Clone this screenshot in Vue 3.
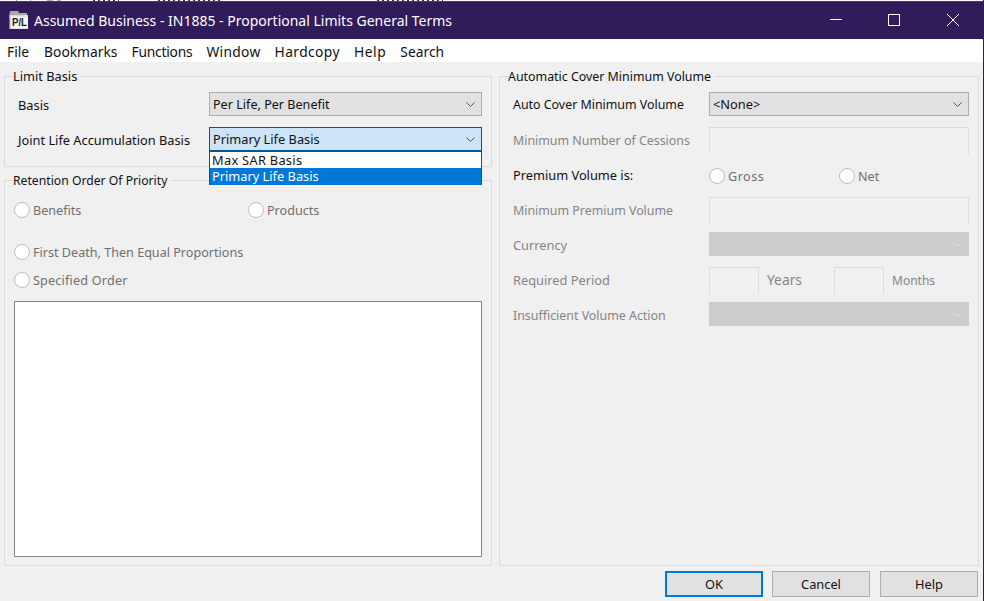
<script setup>
const leftRadios = [
  { label: 'First Death, Then Equal Proportions', cls: 'r-first' },
  { label: 'Specified Order', cls: 'r-spec' }
]
const menus = ['File', 'Bookmarks', 'Functions', 'Window', 'Hardcopy', 'Help', 'Search']
</script>

<template>
  <div class="win">
    <div class="strip"></div>
    <header class="title">
      <svg class="appicon" width="20" height="20" viewBox="0 0 20 20">
        <path d="M0.5 3 L1.5 1 L9 1 L10 3 L18 3 L18 8 L0.5 8 Z" fill="#a9a9a9" />
        <rect x="0.5" y="5" width="18.5" height="14" fill="#d8d8d8" />
        <rect x="2" y="6.5" width="17" height="12" fill="#f4f4f4" />
        <text x="3" y="16" font-size="11" font-weight="700" fill="#1c1c1c" font-family="Liberation Sans" textLength="15" lengthAdjust="spacingAndGlyphs">P/L</text>
      </svg>
      <span class="title-text">Assumed Business - IN1885 - Proportional Limits General Terms</span>
      <div class="caption">
        <svg width="14" height="14" viewBox="0 0 14 14" class="cap-min"><path d="M1 6.5H13" stroke="#fff" fill="none" /></svg>
        <svg width="14" height="14" viewBox="0 0 14 14" class="cap-max"><rect x="1.5" y="1.5" width="11" height="11" stroke="#fff" fill="none" /></svg>
        <svg width="14" height="14" viewBox="0 0 14 14" class="cap-close"><path d="M1 1L13 13M13 1L1 13" stroke="#fff" fill="none" /></svg>
      </div>
    </header>
    <nav class="menu">
      <span v-for="m in menus" :key="m">{{ m }}</span>
    </nav>
    <main class="main">
      <div class="left">
        <section class="group g-limit">
          <div class="legend">Limit Basis</div>
          <div class="row r1">
            <label>Basis</label>
            <div class="combo"><span class="nar">Per Life, Per Benefit</span><svg width="9" height="5" viewBox="0 0 9 5"><path d="M0.5 0.5L4.5 4.5L8.5 0.5" fill="none" stroke="#555" /></svg></div>
          </div>
          <div class="row r2">
            <label>Joint Life Accumulation Basis</label>
            <div class="combo focus">
              <span>Primary Life Basis</span><svg width="9" height="5" viewBox="0 0 9 5"><path d="M0.5 0.5L4.5 4.5L8.5 0.5" fill="none" stroke="#555" /></svg>
              <div class="drop">
                <div class="opt max">Max SAR Basis</div>
                <div class="opt sel">Primary Life Basis</div>
              </div>
            </div>
          </div>
        </section>
        <section class="group g-ret">
          <div class="legend tight ret">Retention Order Of Priority</div>
          <div class="radio-top">
            <div class="radio"><i></i>Benefits</div>
            <div class="radio"><i></i>Products</div>
          </div>
          <div v-for="r in leftRadios" :key="r.label" class="radio" :class="r.cls"><i></i>{{ r.label }}</div>
          <div class="listbox"></div>
        </section>
      </div>
      <section class="group right">
        <div class="legend tight">Automatic Cover Minimum Volume</div>
        <div class="frow f1"><label class="tight">Auto Cover Minimum Volume</label>
          <div class="combo"><span>&lt;None&gt;</span><svg width="9" height="5" viewBox="0 0 9 5"><path d="M0.5 0.5L4.5 4.5L8.5 0.5" fill="none" stroke="#555" /></svg></div>
        </div>
        <div class="frow f2"><label class="dis tight">Minimum Number of Cessions</label><div class="input"></div></div>
        <div class="frow f3"><label>Premium Volume is:</label>
          <div class="pair"><div class="radio gross"><i></i>Gross</div><div class="radio"><i></i>Net</div></div>
        </div>
        <div class="frow f4"><label class="dis tight">Minimum Premium Volume</label><div class="input"></div></div>
        <div class="frow f5"><label class="dis">Currency</label>
          <div class="combo off"><svg width="9" height="5" viewBox="0 0 9 5"><path d="M0.5 0.5L4.5 4.5L8.5 0.5" fill="none" stroke="#e0e0e0" /></svg></div>
        </div>
        <div class="frow f6"><label class="dis">Required Period</label>
          <div class="period">
            <div class="input short"></div><span class="dis yrs">Years</span>
            <div class="input short"></div><span class="dis mon">Months</span>
          </div>
        </div>
        <div class="frow f7"><label class="dis tight">Insufficient Volume Action</label>
          <div class="combo off"><svg width="9" height="5" viewBox="0 0 9 5"><path d="M0.5 0.5L4.5 4.5L8.5 0.5" fill="none" stroke="#e0e0e0" /></svg></div>
        </div>
      </section>
    </main>
    <footer class="foot">
      <button class="btn def">OK</button>
      <button class="btn">Cancel</button>
      <button class="btn last">Help</button>
    </footer>
  </div>
</template>

<style>
html, body { margin: 0; overflow: hidden; }
</style>

<style scoped>
.win {
  width: 984px; height: 601px; box-sizing: border-box;
  display: flex; flex-direction: column;
  background: #f0f0f0; border-right: 1px solid #321c5c;
  font: 12.8px/16px "Noto Sans", sans-serif; color: #111;
  overflow: hidden;
}
.strip {
  height: 1px; flex: none; background-color: #fff;
  background-image:
    linear-gradient(#999, #999), linear-gradient(#999, #999), linear-gradient(#aaa, #aaa), linear-gradient(#aaa, #aaa),
    repeating-linear-gradient(90deg, #333 0 2px, #fff 2px 5px),
    repeating-linear-gradient(90deg, #333 0 2px, #fff 2px 5px),
    repeating-linear-gradient(90deg, #333 0 2px, #fff 2px 5px);
  background-repeat: no-repeat;
  background-size: 1px 1px, 1px 1px, 6px 1px, 4px 1px, 26px 1px, 62px 1px, 66px 1px;
  background-position: 16px 0, 30px 0, 47px 0, 57px 0, 93px 0, 158px 0, 377px 0;
}
.title {
  height: 38px; flex: none; background: #301b5b; box-sizing: border-box;
  border-top: 1px solid #4b3a72; padding-bottom: 1px;
  display: flex; align-items: center; color: #fff; padding-left: 9px;
}
.appicon { flex: none; }
.title-text { margin-left: 5px; margin-top: 2px; font-size: 14px; }
.caption { margin-left: auto; display: flex; align-items: center; gap: 45px; padding-right: 23px; }
.cap-min { margin-right: -1px; }
.menu {
  height: 23px; flex: none; box-sizing: border-box; padding-top: 2px; background: #fff; display: flex; align-items: center;
  gap: 14px; padding-left: 7px; font-size: 13.8px;
}
.menu span:nth-child(1) { margin-right: 1px; }
.menu span:nth-child(3) { letter-spacing: -0.2px; }
.menu span:nth-child(4) { letter-spacing: 0.3px; }
.menu span:nth-child(5) { letter-spacing: 0.4px; }
.menu span:nth-child(6) { letter-spacing: 0.6px; }
.main { flex: 1; min-height: 0; display: flex; gap: 7px; padding: 14px 4px 0; }
.left { width: 488px; display: flex; flex-direction: column; gap: 13px; flex: none; }
.group { border: 1px solid #dcdcdc; position: relative; box-sizing: border-box; }
.legend {
  position: absolute; top: -9px; left: 8px; background: #f0f0f0;
  padding-right: 3px; white-space: nowrap;
}
.tight { font-size: 12.4px; }
.legend.tight { top: -8px; }
.legend.ret { font-size: 12.2px; }
.nar { font-size: 12.6px; margin-top: 2px; }
.g-limit { height: 91px; flex: none; padding: 15px 9px 0 13px; }
.row { display: flex; align-items: center; justify-content: space-between; height: 24px; }
.row label { margin-top: 2px; }
.row.r2 { margin-top: 11px; }
.row .combo { width: 273px; }
.g-ret { flex: 1; padding: 0 9px 8px 9px; display: flex; flex-direction: column; }
.radio {
  display: flex; align-items: flex-start; color: #6f6f6f; height: 16px; line-height: 18px;
  white-space: nowrap; font-size: 12.6px;
}
.radio i {
  width: 14px; height: 14px; border: 1px solid #bdbdbd; border-radius: 50%;
  background: #fff; margin-right: 3px; flex: none;
}
.radio.gross { letter-spacing: 0.5px; }
.radio.r-spec { letter-spacing: 0.2px; }
.radio-top { display: flex; margin-top: 21px; }
.radio-top .radio { width: 234px; }
.r-first { margin-top: 26px; }
.r-spec { margin-top: 12px; }
.listbox {
  flex: 1; margin-top: 13px; background: #fff; border: 1px solid #85858f;
}
.combo {
  height: 24px; box-sizing: border-box; background: #e1e1e1; border: 1px solid #adadad;
  display: flex; align-items: center; justify-content: space-between;
  padding: 0 6px 0 3px; position: relative;
}
.combo.focus { background: #cce4f7; border-color: #005499; }
.combo.off { background: #cccccc; border-color: #cccccc; justify-content: flex-end; }
.drop {
  position: absolute; left: -1px; right: -1px; top: 23px;
  background: #fff; border: solid #005499; border-width: 1px 1px 0; z-index: 2;
}
.opt { height: 16px; line-height: 16px; padding-left: 2px; }
.opt.max { letter-spacing: 0.3px; }
.opt.sel { background: #0078d7; color: #fff; height: 17px; line-height: 17px; }
.right { flex: 1; padding: 15px 9px 0 13px; }
.frow { display: grid; grid-template-columns: 196px 260px; align-items: center; }
.frow label { white-space: nowrap; }
.dis { color: #858585; }
.f1 { height: 24px; }
.f2 { height: 27px; margin-top: 11px; }
.f3 { height: 16px; margin-top: 13px; }
.f4 { height: 27px; margin-top: 14px; }
.f5 { height: 24px; margin-top: 8px; }
.f6 { height: 27px; margin-top: 11px; }
.f7 { height: 24px; margin-top: 8px; }
.f1 label, .f5 label { margin-top: 2px; }
.f7 label { margin-top: 4px; }
.f3 label, .f6 label { margin-bottom: 2px; }
.input { height: 27px; box-sizing: border-box; border: 1px solid #dcdcdc; border-bottom: 0; background: #f0f0f0; }
.pair { display: flex; }
.pair .radio { width: 130px; }
.period { display: flex; align-items: center; }
.input.short { width: 50px; flex: none; }
.period span { margin-left: 8px; margin-bottom: 2px; }
.period .yrs { width: 67px; font-size: 13.8px; }
.period .mon { font-size: 12px; margin-bottom: 0; }
.foot { height: 35px; flex: none; display: flex; justify-content: flex-end; gap: 9px; padding: 5px 5px 4px 0; box-sizing: border-box; }
.btn {
  width: 98px; height: 26px; box-sizing: border-box; background: #e1e1e1; border: 1px solid #adadad;
  font: inherit; color: #111; padding: 0; margin: 0;
}
.btn.def { border: 2px solid #0078d7; }
.btn.last { margin-left: 1px; }
</style>
